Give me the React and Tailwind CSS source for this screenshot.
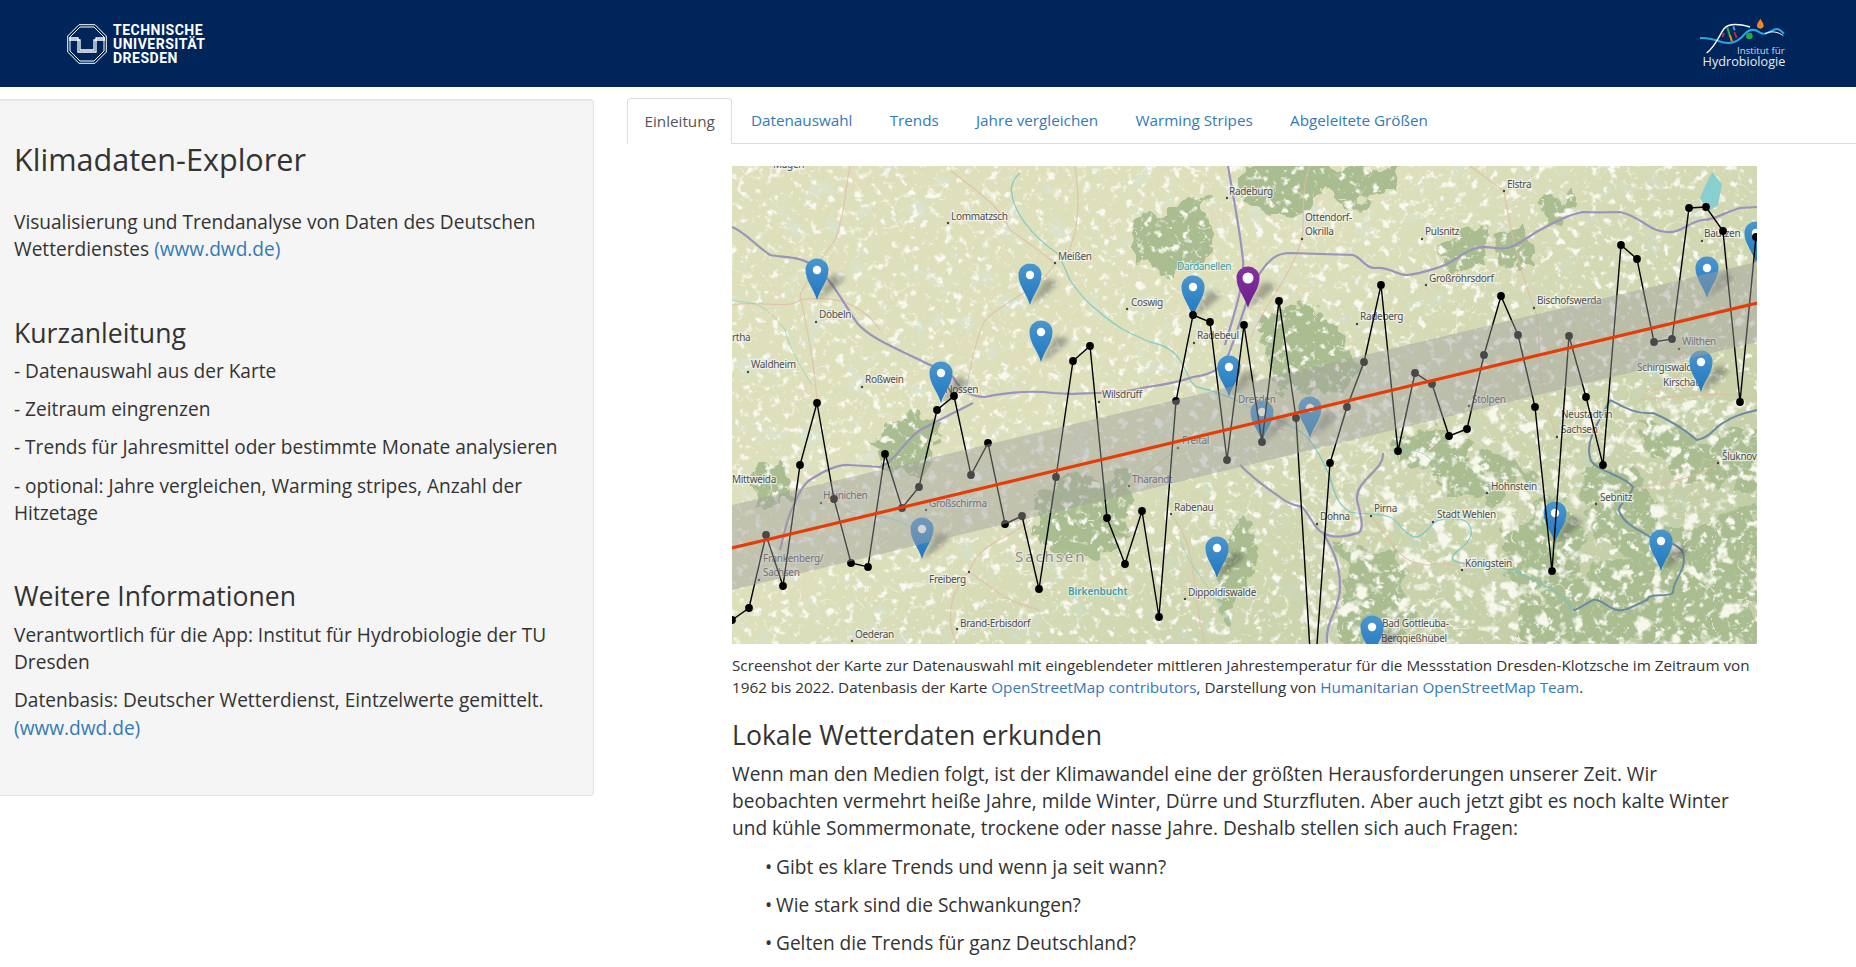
import React from "react";

const years = [
  [732, 620], [749, 608], [766, 535], [783, 586], [800, 465], [817, 403], [834, 499], [851, 563], [868, 567], [885, 454],
  [902, 508], [919, 487], [937, 410], [954, 396], [971, 475], [988, 443], [1005, 524], [1022, 516], [1039, 589], [1056, 477],
  [1073, 361], [1090, 346], [1107, 518], [1125, 564], [1142, 511], [1159, 617], [1176, 401], [1193, 315], [1210, 322], [1227, 460],
  [1244, 325], [1262, 442], [1279, 301], [1296, 418], [1313, 700], [1330, 463], [1347, 407], [1364, 362], [1381, 285], [1398, 451],
  [1415, 373], [1432, 384], [1449, 436], [1467, 429], [1484, 355], [1501, 296], [1518, 335], [1535, 407], [1552, 571], [1569, 336],
  [1586, 397], [1603, 465], [1621, 245], [1637, 259], [1654, 342], [1672, 339], [1689, 208], [1706, 207], [1723, 231], [1740, 402], [1756, 237],
];

const pins = [
  [817, 300], [1030, 305], [1041, 362], [941, 403], [1193, 317], [1229, 397], [1707, 298], [1701, 392], [1756, 263],
  [922, 559], [1217, 578], [1262, 442], [1310, 438], [1555, 543], [1661, 571], [1372, 657],
];

const labels = [
  ["Lommatzsch", 951, 220, 948, 223], ["Meißen", 1058, 260, 1055, 263], ["Coswig", 1131, 306, 1127, 309], ["Radebeul", 1197, 339, 1194, 343],
  ["Döbeln", 819, 318, 816, 322], ["Waldheim", 751, 368, 748, 372], ["Roßwein", 865, 383, 862, 387], ["Nossen", 945, 393],
  ["Wilsdruff", 1102, 398, 1099, 402], ["rtha", 732, 341], ["Magen", 773, 168], ["Radeburg", 1229, 195, 1227, 198],
  ["Elstra", 1507, 188, 1504, 191], ["Ottendorf-", 1305, 221], ["Okrilla", 1305, 235, 1302, 239], ["Pulsnitz", 1425, 235, 1422, 239],
  ["Großröhrsdorf", 1429, 282, 1426, 285], ["Bischofswerda", 1537, 304, 1534, 308], ["Radeberg", 1360, 320, 1357, 324], ["Bautzen", 1704, 237, 1702, 241],
  ["Wilthen", 1682, 345, 1679, 349], ["Schirgiswalde-", 1637, 371], ["Kirschau", 1663, 386], ["Stolpen", 1472, 403, 1469, 406], ["Dresden", 1238, 403],
  ["Mittweida", 732, 483], ["Hainichen", 823, 499, 821, 503], ["Großschirma", 929, 507, 926, 510], ["Frankenberg/", 763, 562], ["Sachsen", 763, 576, 759, 580],
  ["Freiberg", 929, 583, 969, 572], ["Brand-Erbisdorf", 960, 627, 957, 629], ["Oederan", 855, 638, 852, 641], ["Tharandt", 1132, 483, 1129, 486],
  ["Rabenau", 1174, 511, 1171, 514], ["Freital", 1182, 444, 1178, 448], ["Dippoldiswalde", 1188, 596, 1185, 599], ["Dohna", 1320, 520, 1317, 524],
  ["Pirna", 1374, 512, 1371, 516], ["Stadt Wehlen", 1437, 518, 1433, 522], ["Hohnstein", 1491, 490, 1487, 493], ["Königstein", 1465, 567, 1462, 570],
  ["Sebnitz", 1600, 501, 1596, 504], ["Šluknov", 1722, 460, 1718, 463], ["Neustadt in", 1561, 418], ["Sachsen", 1561, 433, 1557, 437],
  ["Bad Gottleuba-", 1382, 627], ["Berggießhübel", 1381, 642],
];

const forests = [
  "M1240 166 L1396 166 L1392 190 L1360 205 L1330 195 L1300 212 L1262 215 L1240 200Z",
  "M1262 318 L1300 300 L1345 330 L1352 375 L1330 400 L1290 395 L1268 370Z",
  "M1127 222 L1160 215 L1178 205 L1205 195 L1212 235 L1196 268 L1160 273 L1135 262Z",
  "M1032 495 L1075 478 L1128 475 L1130 535 L1090 560 L1050 552 L1030 530Z",
  "M1520 600 L1620 560 L1680 555 L1757 535 L1757 644 L1520 644Z",
  "M1590 460 L1640 475 L1660 520 L1700 520 L1757 505 L1757 540 L1640 560 L1600 540 L1580 500Z",
  "M1430 470 L1490 450 L1530 470 L1500 505 L1450 500Z",
  "M1500 530 L1560 500 L1590 530 L1560 600 L1510 585Z",
  "M1340 540 L1400 560 L1420 610 L1400 644 L1340 644Z",
  "M870 440 L900 415 L940 420 L925 470 L890 475Z",
  "M1500 240 L1530 225 L1535 265 L1510 270Z",
  "M750 470 L790 462 L785 505 L755 510Z",
  "M1240 520 L1260 530 L1250 590 L1225 620 L1210 580Z",
  "M1640 415 L1700 445 L1757 430 L1757 490 L1690 480 L1645 450Z",
  "M1390 440 L1440 425 L1480 445 L1440 470 L1400 465Z",
  "M1440 240 L1490 220 L1480 265 L1450 280Z",
  "M1540 200 L1575 190 L1570 225 L1545 230Z",
];

const motorways = [
  "M732 227 C745 232 755 245 770 255 C785 258 800 255 817 268 C830 278 845 305 857 323 C870 338 895 348 920 360 C935 368 945 370 953 377 C960 390 970 397 985 397 C1010 392 1030 390 1053 393 C1075 395 1085 393 1097 393 C1120 393 1135 390 1147 387 C1165 385 1185 380 1193 377 C1210 375 1225 370 1232 345 C1240 325 1250 285 1260 273 C1270 258 1278 253 1290 253 L1353 255 C1362 258 1365 268 1375 268 C1390 266 1395 275 1407 275 C1420 274 1430 270 1440 267 C1455 262 1465 250 1477 248 C1490 245 1495 250 1507 248 C1520 245 1530 235 1540 230 C1555 222 1570 214 1583 212 C1600 213 1605 212 1620 212 C1640 216 1650 232 1667 232 C1680 234 1690 221 1703 220 C1715 220 1725 212 1740 208 L1757 207",
  "M1228 166 C1232 190 1240 230 1243 260 C1245 285 1232 320 1225 345",
  "M780 550 C785 530 788 515 793 507 C800 490 805 482 813 478 C825 470 840 464 850 465 L880 467 C895 462 905 440 920 430 C930 424 950 415 973 403",
  "M1240 465 C1250 475 1265 487 1277 495 C1290 505 1295 505 1302 507 C1310 515 1315 530 1323 533 C1335 540 1350 535 1358 533 C1364 530 1362 520 1357 500 C1355 480 1385 470 1383 453",
  "M1323 533 C1330 545 1340 560 1340 587 C1340 610 1325 620 1327 643",
];

const elbe = "M1020 173 C1012 180 1010 190 1012 193 C1013 210 1030 235 1057 253 C1064 265 1068 275 1070 280 C1080 295 1090 305 1097 310 C1110 322 1120 328 1130 333 L1150 342 C1165 345 1175 352 1180 360 C1188 372 1190 385 1197 387 C1210 390 1225 395 1240 402 C1265 415 1295 425 1307 437 C1318 450 1325 465 1330 477 C1335 495 1338 505 1350 512 C1360 515 1375 512 1390 517 C1400 522 1405 537 1417 537 C1428 534 1432 520 1440 520 C1450 518 1462 518 1467 522 C1474 530 1472 537 1465 545 C1458 550 1450 557 1453 560 C1460 565 1470 563 1490 565 C1500 567 1505 570 1513 570 C1530 578 1545 585 1553 590 C1565 598 1572 605 1572 615";

const streams = [
  "M732 300 C745 305 760 295 785 330 C790 350 800 365 812 385",
  "M845 510 C870 520 900 510 925 540",
  "M1390 450 C1400 455 1420 440 1440 470",
  "M1180 540 C1190 570 1215 590 1230 625",
];

const border = "M1610 400 C1620 405 1635 415 1653 413 C1670 420 1685 430 1697 440 C1710 438 1715 427 1723 423 C1735 415 1745 413 1757 410 M1610 400 C1600 420 1585 440 1590 457 C1590 470 1625 475 1633 487 C1630 500 1615 505 1620 513 C1625 525 1640 530 1650 537 C1665 540 1680 545 1683 553 C1688 570 1672 580 1673 593 C1665 598 1650 592 1647 600 C1635 605 1625 612 1617 610 C1608 608 1600 598 1593 600 C1585 604 1578 610 1573 610";

const roads = [
  "M850 166 C845 190 845 215 835 240 C825 255 815 265 800 295 C805 320 815 360 817 403",
  "M950 170 C975 190 1000 205 1010 230 C1040 250 1050 260 1055 263 C1040 290 1005 300 985 320 C975 340 970 370 965 395",
  "M732 305 C760 300 790 310 800 300 C830 295 860 300 880 330",
  "M1075 166 C1080 200 1080 230 1065 260 M1310 166 C1300 190 1305 220 1302 239 C1290 280 1260 310 1250 340",
  "M1504 191 C1510 230 1520 270 1534 308 C1545 330 1530 370 1557 437 M1470 166 L1504 191",
  "M969 572 C980 540 1010 540 1030 520 M969 572 C950 590 945 620 957 644 M969 572 C990 585 1000 600 1040 610",
  "M1171 514 C1200 550 1190 590 1205 644 M1129 486 C1150 470 1170 455 1178 448",
  "M1371 516 C1395 545 1400 565 1430 565 C1445 560 1460 570 1475 565 M1596 504 C1630 480 1680 490 1718 463",
  "M1679 349 C1700 380 1650 385 1640 400 C1690 395 1720 390 1757 400",
];

function Pin({ x, y, purple }) {
  return (
    <g transform={`translate(${x} ${y})`}>
      <path d="M0 0 C8 -3 20 -14 27 -20 C28 -24 20 -27 14 -25 L0 0Z" fill="#333" opacity="0.35" filter="url(#soft)" />
      <path
        d="M0 0 C-3 -11 -11.5 -19 -11.5 -30 A11.5 11.5 0 1 1 11.5 -30 C11.5 -19 3 -11 0 0Z"
        fill={purple ? "url(#pinPurple)" : "url(#pinBlue)"}
      />
      <circle cx="0" cy="-30" r={purple ? 5.5 : 4.2} fill="#fff" />
    </g>
  );
}

function MapPicture() {
  const linePoints = years.map((p) => p.join(",")).join(" ");
  return (
    <svg viewBox="732 166 1025 478" width="1025" height="478" className="block">
      <defs>
        <linearGradient id="pinBlue" x1="0" y1="0" x2="0" y2="1">
          <stop offset="0" stopColor="#4a96cf" />
          <stop offset="1" stopColor="#1f76bf" />
        </linearGradient>
        <linearGradient id="pinPurple" x1="0" y1="0" x2="0" y2="1">
          <stop offset="0" stopColor="#84339f" />
          <stop offset="1" stopColor="#6a1f8c" />
        </linearGradient>
        <linearGradient id="darkEast" x1="0" y1="0" x2="1" y2="0.7">
          <stop offset="0.45" stopColor="#b0c297" stopOpacity="0" />
          <stop offset="1" stopColor="#b0c297" stopOpacity="0.6" />
        </linearGradient>
        <filter id="soft" x="-50%" y="-50%" width="200%" height="200%">
          <feGaussianBlur stdDeviation="2.5" />
        </filter>
        <filter id="map" x="0" y="0" width="100%" height="100%">
          <feGaussianBlur stdDeviation="0.5" />
        </filter>
        <filter id="rough" x="-10%" y="-10%" width="120%" height="120%">
          <feTurbulence type="fractalNoise" baseFrequency="0.045" numOctaves="3" seed="3" result="n" />
          <feDisplacementMap in="SourceGraphic" in2="n" scale="34" xChannelSelector="R" yChannelSelector="G" />
        </filter>
        <filter id="villages" x="0" y="0" width="100%" height="100%">
          <feTurbulence type="fractalNoise" baseFrequency="0.11" numOctaves="3" seed="7" />
          <feColorMatrix values="0 0 0 0 0.95  0 0 0 0 0.94  0 0 0 0 0.88  6 0 0 0 -3.45" />
          <feGaussianBlur stdDeviation="0.6" />
        </filter>
        <filter id="clearings" x="0" y="0" width="100%" height="100%">
          <feTurbulence type="fractalNoise" baseFrequency="0.06" numOctaves="3" seed="31" />
          <feColorMatrix values="0 0 0 0 0.93  0 0 0 0 0.93  0 0 0 0 0.84  7 0 0 0 -4" />
          <feGaussianBlur stdDeviation="0.6" />
        </filter>
        <filter id="veins" x="0" y="0" width="100%" height="100%">
          <feTurbulence type="turbulence" baseFrequency="0.035" numOctaves="2" seed="21" />
          <feColorMatrix values="0 0 0 0 0.92  0 0 0 0 0.86  0 0 0 0 0.76  -16 0 0 0 0.7" />
        </filter>
        <filter id="woods" x="0" y="0" width="100%" height="100%">
          <feTurbulence type="fractalNoise" baseFrequency="0.045" numOctaves="4" seed="12" />
          <feColorMatrix values="0 0 0 0 0.7  0 0 0 0 0.77  0 0 0 0 0.6  0 7 0 0 -4.35" />
          <feGaussianBlur stdDeviation="0.7" />
        </filter>
      </defs>
      <g filter="url(#map)">
        <rect x="732" y="166" width="1025" height="478" fill="#dee0bc" />
        <rect x="732" y="166" width="1025" height="478" filter="url(#woods)" />
        <rect x="732" y="166" width="1025" height="478" fill="url(#darkEast)" />
        <g filter="url(#rough)">
          {forests.map((d, i) => (
            <path key={i} d={d} fill="#a9bd90" />
          ))}
        </g>
        <rect x="732" y="166" width="1025" height="478" filter="url(#villages)" />
        <rect x="1300" y="400" width="457" height="244" filter="url(#clearings)" />
        <rect x="732" y="166" width="1025" height="478" filter="url(#veins)" />
        {roads.map((d, i) => (
          <path key={i} d={d} fill="none" stroke="#dfbda6" strokeWidth="1.2" opacity="0.8" />
        ))}
        {streams.map((d, i) => (
          <path key={i} d={d} fill="none" stroke="#86cbc8" strokeWidth="0.9" opacity="0.7" />
        ))}
        <path d={elbe} fill="none" stroke="#6fc6c8" strokeWidth="1.3" opacity="0.8" />
        <path d="M1712 172 L1722 184 L1718 205 L1708 212 L1700 198 L1706 184Z" fill="#8acfd0" />
        <path d={border} fill="none" stroke="#6d8aa3" strokeWidth="2" />
        {motorways.map((d, i) => (
          <path key={i} d={d} fill="none" stroke="#9a93bb" strokeWidth="2.2" />
        ))}
      </g>
      <g fontFamily="'Noto Sans', sans-serif" fontSize="10" letterSpacing="-0.3">
        {labels.map(([text, x, y, dx, dy], i) => (
          <g key={i}>
            {dx && <circle cx={dx} cy={dy} r="1.2" fill="#444" />}
            <text x={x} y={y} fill="#4f4f4f" stroke="#f4f4ee" strokeWidth="2.5" strokeOpacity="0.75" paintOrder="stroke">
              {text}
            </text>
          </g>
        ))}
        <text x="1177" y="270" fill="#3c9fa5" stroke="#f4f4ee" strokeWidth="2" strokeOpacity="0.6" paintOrder="stroke">Dardanellen</text>
        <text x="1068" y="595" fill="#3c9fa5" fontWeight="600" letterSpacing="-0.05" stroke="#f4f4ee" strokeWidth="2" strokeOpacity="0.6" paintOrder="stroke">Birkenbucht</text>
        <text x="1015" y="562" fill="#8d8d8d" fontSize="15" letterSpacing="1.9" stroke="#f4f4ee" strokeWidth="2" strokeOpacity="0.6" paintOrder="stroke">Sachsen</text>
      </g>
      {pins.map(([x, y]) => (
        <Pin key={`${x}-${y}`} x={x} y={y} />
      ))}
      <Pin x={1248} y={308} purple />
      <polyline points={linePoints} fill="none" stroke="#000" strokeWidth="1.4" />
      {years.map(([x, y]) => (
        <circle key={x} cx={x} cy={y} r="3.9" fill="#000" />
      ))}
      <polygon points="732,505 1757,262 1757,342 732,590" fill="#a0a0a0" fillOpacity="0.45" />
      <line x1="732" y1="548" x2="1757" y2="303" stroke="#e63d08" strokeWidth="3.2" />
    </svg>
  );
}

function TuLogo() {
  return (
    <div className="flex items-center gap-[6px]">
      <svg width="40" height="40" viewBox="0 0 40 40" fill="none" stroke="#fff" strokeWidth="1">
        <path d="M12 .7 H28 L39.3 12 V28 L28 39.3 H12 L.7 28 V12Z" />
        <path d="M13 3 H27 L37 13 V27 L27 37 H13 L3 27 V13Z" />
        <path d="M2 14 H11 V28 H29 V14 H38" strokeWidth="1.3" />
        <path d="M2 16 H13 V26 H27 V16 H38" strokeWidth="1.3" />
      </svg>
      <div className="font-['Roboto',sans-serif] font-bold text-[14px] leading-[14px] tracking-[0.5px] text-white">
        <div>TECHNISCHE</div>
        <div>UNIVERSITÄT</div>
        <div>DRESDEN</div>
      </div>
    </div>
  );
}

function HydroLogo() {
  return (
    <svg width="87" height="53" viewBox="150 50 261 159" fill="none">
      <path d="M150 113 C175 112 195 118 215 125 C240 133 265 125 285 100 C300 85 315 85 332 98 C345 105 360 95 372 88 C385 82 392 90 402 100" stroke="#27a7df" strokeWidth="6" />
      <path d="M170 158 C195 140 205 110 222 85 C235 70 265 70 300 80" stroke="#fff" strokeWidth="4.5" />
      <path d="M345 100 C365 90 385 95 400 106" stroke="#fff" strokeWidth="3" />
      <path d="M222 98 L217 110" stroke="#c3273a" strokeWidth="6" />
      <path d="M232 82 L240 108" stroke="#2fa84f" strokeWidth="6" />
      <path d="M240 105 L246 123" stroke="#f08a1d" strokeWidth="6" />
      <path d="M253 95 L260 113" stroke="#c3273a" strokeWidth="6" />
      <path d="M250 78 L254 90" stroke="#27a7df" strokeWidth="6" />
      <circle cx="298" cy="107" r="10" fill="#25a84b" />
      <path d="M331 55 C327 63 321 68 321 75 A10 10 0 0 0 341 75 C341 68 335 63 331 55Z" fill="#f4861f" />
      <text x="404" y="160" textAnchor="end" fontFamily="'Open Sans', sans-serif" fontSize="29" fill="#d5dbe6">Institut für</text>
      <text x="406" y="197" textAnchor="end" fontFamily="'Open Sans', sans-serif" fontSize="38" fill="#e6eaf0">Hydrobiologie</text>
    </svg>
  );
}

const tabs = ["Datenauswahl", "Trends", "Jahre vergleichen", "Warming Stripes", "Abgeleitete Größen"];
const questions = [
  "Gibt es klare Trends und wenn ja seit wann?",
  "Wie stark sind die Schwankungen?",
  "Gelten die Trends für ganz Deutschland?",
];

export default function App() {
  return (
    <div className="h-screen overflow-hidden bg-white font-['Open_Sans',sans-serif] text-[#333]">
      <header className="h-[87px] bg-[#00255a] flex items-center justify-between pl-[67px] pr-[69px]">
        <TuLogo />
        <HydroLogo />
      </header>

      <div className="flex items-start">
        <aside className="mt-[12px] w-[594px] h-[697px] shrink-0 bg-[#f5f5f5] border border-l-0 border-[#e3e3e3] rounded-r shadow-[inset_0_1px_1px_rgba(0,0,0,0.05)] pl-[14px] pr-[19px] text-[19.1px] leading-[27px]">
          <h2 className="text-[30.6px] leading-[36px] mt-[41px] mb-[32px]">Klimadaten-Explorer</h2>
          <p>
            Visualisierung und Trendanalyse von Daten des Deutschen Wetterdienstes{" "}
            <a className="text-[#337ab7]">(www.dwd.de)</a>
          </p>
          <h3 className="text-[26.6px] leading-[32px] mt-[54px] mb-[9px]">Kurzanleitung</h3>
          <p className="mb-[11px]">- Datenauswahl aus der Karte</p>
          <p className="mb-[11px]">- Zeitraum eingrenzen</p>
          <p className="mb-[12px]">- Trends für Jahresmittel oder bestimmte Monate analysieren</p>
          <p>- optional: Jahre vergleichen, Warming stripes, Anzahl der Hitzetage</p>
          <h3 className="text-[26.6px] leading-[32px] mt-[53px] mb-[10px]">Weitere Informationen</h3>
          <p className="mb-[10px]">Verantwortlich für die App: Institut für Hydrobiologie der TU Dresden</p>
          <p className="leading-[28px]">
            Datenbasis: Deutscher Wetterdienst, Eintzelwerte gemittelt.{" "}
            <a className="text-[#337ab7]">(www.dwd.de)</a>
          </p>
        </aside>

        <main className="ml-[33px] flex-1 min-w-0">
          <nav className="mt-[11px] h-[46px] flex border-b border-[#ddd] text-[15.25px]">
            <span className="h-[46px] px-[16.5px] flex items-center bg-white border border-b-0 border-[#ddd] rounded-t text-[#555]">
              Einleitung
            </span>
            {tabs.map((t) => (
              <a key={t} className="h-[45px] px-[18.6px] flex items-center text-[#337ab7]">
                {t}
              </a>
            ))}
          </nav>

          <div className="ml-[105px] w-[1026px] mt-[22px]">
            <MapPicture />
            <p className="mt-[11px] text-[15.25px] leading-[21.5px]">
              Screenshot der Karte zur Datenauswahl mit eingeblendeter mittleren Jahrestemperatur für die Messstation
              Dresden-Klotzsche im Zeitraum von 1962 bis 2022. Datenbasis der Karte{" "}
              <a className="text-[#337ab7]">OpenStreetMap contributors</a>, Darstellung von{" "}
              <a className="text-[#337ab7]">Humanitarian OpenStreetMap Team</a>.
            </p>
            <h3 className="text-[26.6px] leading-[32px] mt-[21px] mb-[10px]">Lokale Wetterdaten erkunden</h3>
            <p className="text-[19.1px] leading-[27px]">
              Wenn man den Medien folgt, ist der Klimawandel eine der größten Herausforderungen unserer Zeit. Wir
              beobachten vermehrt heiße Jahre, milde Winter, Dürre und Sturzfluten. Aber auch jetzt gibt es noch kalte
              Winter und kühle Sommermonate, trockene oder nasse Jahre. Deshalb stellen sich auch Fragen:
            </p>
            <ul className="mt-[12px] pl-[33px] text-[19.1px] leading-[27px]">
              {questions.map((q) => (
                <li key={q} className="flex mb-[11px]">
                  <span className="w-[11px] shrink-0">•</span>
                  {q}
                </li>
              ))}
            </ul>
          </div>
        </main>
      </div>
    </div>
  );
}
